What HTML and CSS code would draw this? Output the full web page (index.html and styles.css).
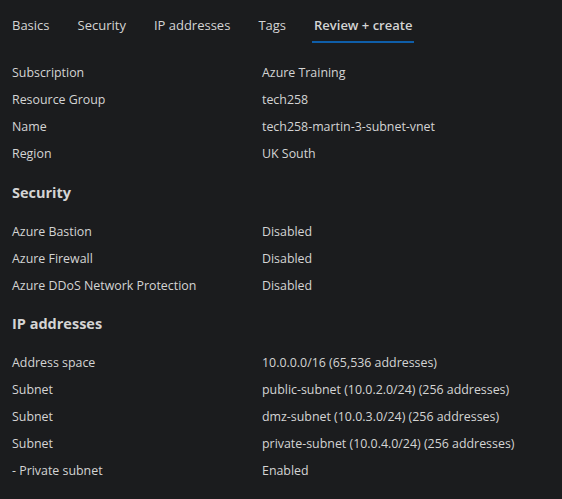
FILE: index.html
```html
<!DOCTYPE html>
<html>
<head>
<meta charset="utf-8">
<link rel="stylesheet" href="styles.css">
</head>
<body>
<div class="page">
  <nav class="tabs">
    <span class="tab">Basics</span>
    <span class="tab">Security</span>
    <span class="tab">IP addresses</span>
    <span class="tab">Tags</span>
    <span class="tab active">Review + create</span>
  </nav>
  <div class="rows">
    <div class="row"><span class="label">Subscription</span><span class="value">Azure Training</span></div>
    <div class="row"><span class="label">Resource Group</span><span class="value">tech258</span></div>
    <div class="row"><span class="label">Name</span><span class="value">tech258-martin-3-subnet-vnet</span></div>
    <div class="row"><span class="label">Region</span><span class="value">UK South</span></div>
  </div>
  <h2 class="section">Security</h2>
  <div class="rows">
    <div class="row"><span class="label">Azure Bastion</span><span class="value">Disabled</span></div>
    <div class="row"><span class="label">Azure Firewall</span><span class="value">Disabled</span></div>
    <div class="row"><span class="label">Azure DDoS Network Protection</span><span class="value">Disabled</span></div>
  </div>
  <h2 class="section section-tight">IP addresses</h2>
  <div class="rows">
    <div class="row"><span class="label">Address space</span><span class="value">10.0.0.0/16 (65,536 addresses)</span></div>
    <div class="row"><span class="label">Subnet</span><span class="value">public-subnet (10.0.2.0/24) (256 addresses)</span></div>
    <div class="row"><span class="label">Subnet</span><span class="value">dmz-subnet (10.0.3.0/24) (256 addresses)</span></div>
    <div class="row"><span class="label">Subnet</span><span class="value">private-subnet (10.0.4.0/24) (256 addresses)</span></div>
    <div class="row"><span class="label">- Private subnet</span><span class="value">Enabled</span></div>
  </div>
</div>
</body>
</html>
```
FILE: styles.css
```css
html, body {
  margin: 0;
  padding: 0;
  background: #1b1c1e;
}
.page {
  width: 562px;
  height: 499px;
  overflow: hidden;
  background: #1b1c1e;
  color: #d4d4d4;
  font-family: "Open Sans", "Noto Sans", sans-serif;
  font-size: 12.4px;
  padding-left: 12px;
  box-sizing: border-box;
}
.tabs {
  display: flex;
  gap: 24px;
  margin-left: -2px;
  margin-bottom: 16px;
}
.tab {
  padding: 14px 2px 5px;
  line-height: 22px;
  border-bottom: 2px solid transparent;
  font-size: 13px;
}
.tab.active {
  font-weight: 600;
  border-bottom-color: #0f5ea9;
}
.rows {
  display: flex;
  flex-direction: column;
}
.row {
  display: grid;
  grid-template-columns: 250px 1fr;
  line-height: 27px;
  height: 27px;
}
.section {
  margin: 15px 0 14px;
  font-size: 14.5px;
  font-weight: 700;
  line-height: 22px;
}
.section-tight {
  margin-top: 14px;
}
```
